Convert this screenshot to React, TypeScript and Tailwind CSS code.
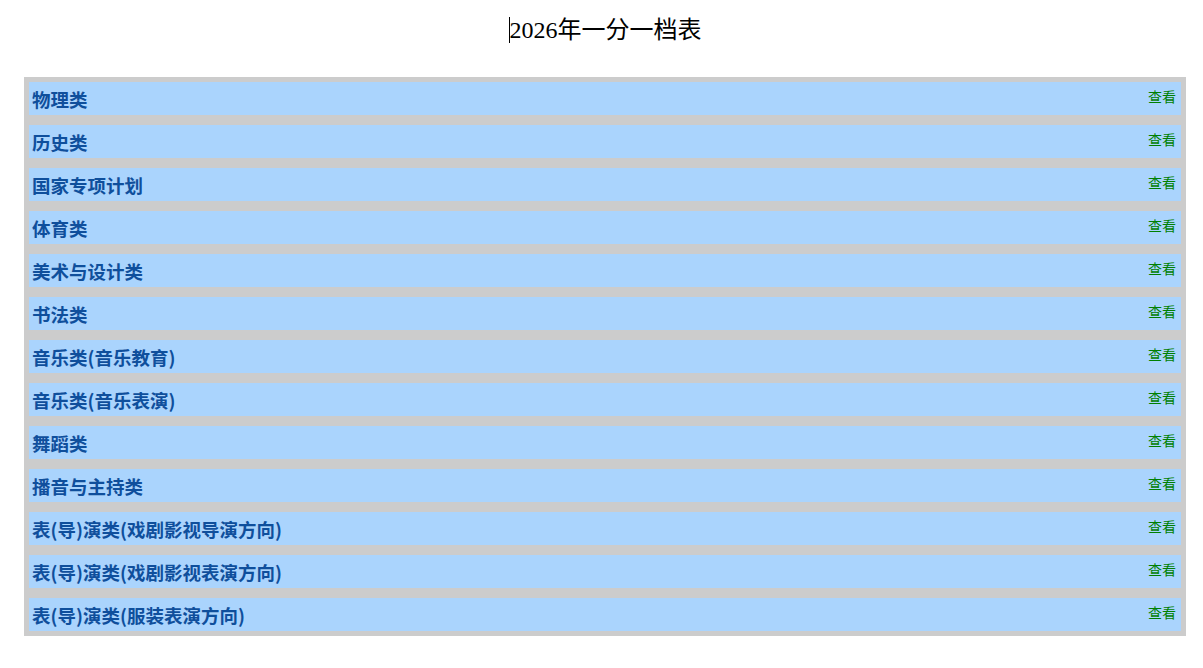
const categories = [
	"物理类",
	"历史类",
	"国家专项计划",
	"体育类",
	"美术与设计类",
	"书法类",
	"音乐类(音乐教育)",
	"音乐类(音乐表演)",
	"舞蹈类",
	"播音与主持类",
	"表(导)演类(戏剧影视导演方向)",
	"表(导)演类(戏剧影视表演方向)",
	"表(导)演类(服装表演方向)"
]

export default function App() {
	return (
		<div className="min-h-[668px] bg-white font-['Noto_Sans_CJK_SC',sans-serif]">
			<h1 className="pt-[15px] pl-[7px] h-[77px] text-center text-[24px] leading-[30px] font-normal text-black font-['Liberation_Serif','Noto_Sans_CJK_SC',serif]">
				<span className="border-l border-black">2026年一分一档表</span>
			</h1>
			<div className="ml-[24px] w-[1162px] bg-[#cccccc] p-[5px] flex flex-col gap-[10px]">
				{categories.map((name, index) => (
					<div
						key={index}
						className="h-[33px] bg-[#aad4fd] flex items-start justify-between pl-[3px] pr-[5px]">
						<span className="mt-[4px] text-[18.5px] leading-[26px] font-bold text-[#0f4f9c]">
							{name}
						</span>
						<span className="mt-[5px] text-[14px] leading-[18px] text-[#008000]">
							查看
						</span>
					</div>
				))}
			</div>
		</div>
	)
}
